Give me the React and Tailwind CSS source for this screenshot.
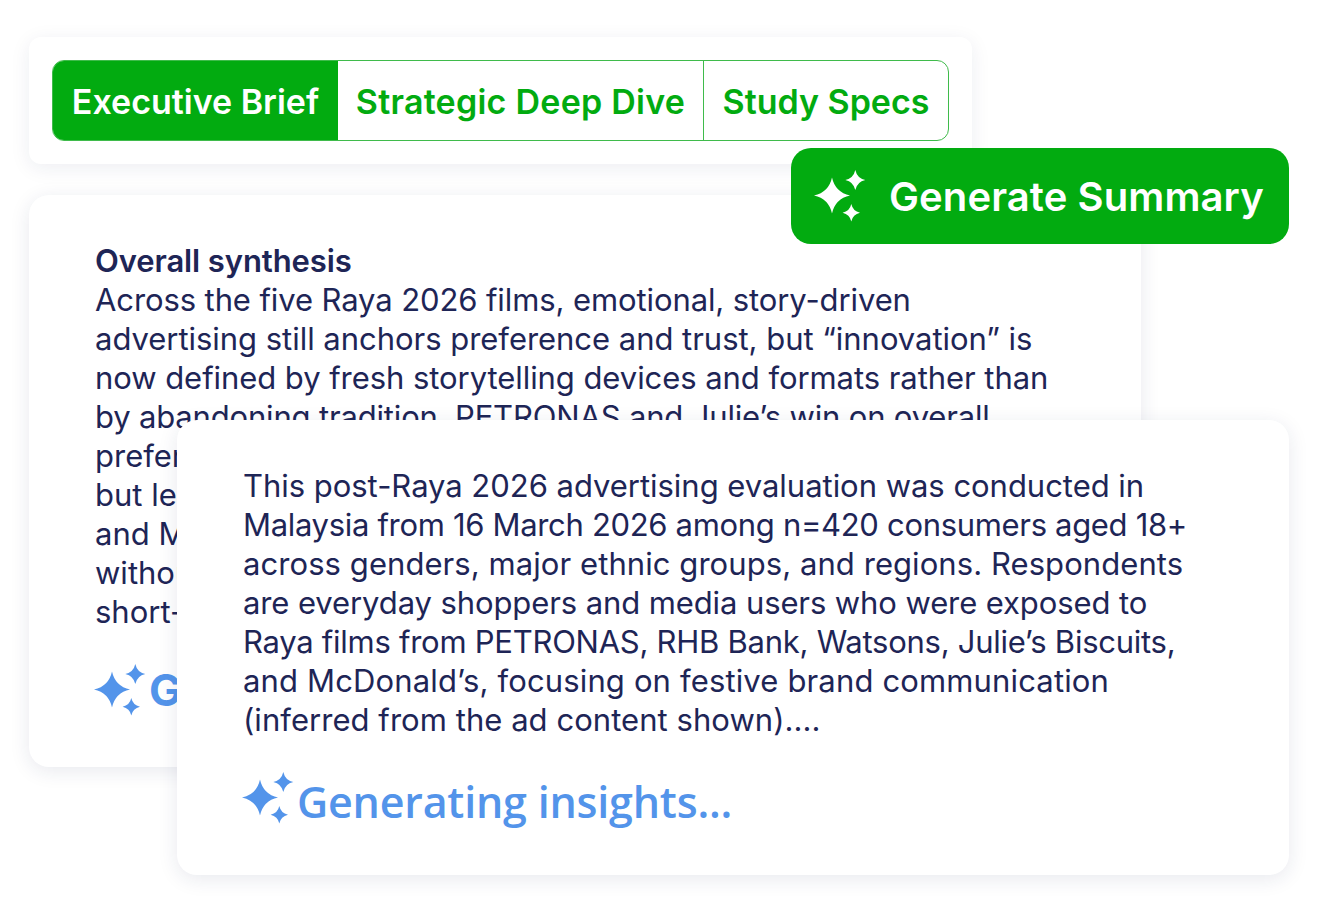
import React from 'react'

const body = "font-['Inter','Liberation_Sans',sans-serif]"

// each line carries its own tracking so the widths land where the reference has them
const backLines = [
  ['Across the five Raya 2026 films, emotional, story-driven', 'tracking-[-0.1px]'],
  ['advertising still anchors preference and trust, but “innovation” is', 'tracking-[-0.03px]'],
  ['now defined by fresh storytelling devices and formats rather than', 'tracking-[-0.06px]'],
  ['by abandoning tradition. PETRONAS and Julie’s win on overall', 'tracking-[-0.17px]'],
  ['preference and emotional connection, while RHB Bank scores', ''],
  ['but leaves room to build stronger brand linkage, and Watsons', ''],
  ['and McDonald’s stand out for novelty and entertainment value', ''],
  ['without always converting that distinctiveness into intent over', ''],
  ['short-term recall alone.', ''],
]

const frontLines = [
  ['This post-Raya 2026 advertising evaluation was conducted in', 'tracking-[-0.03px]'],
  ['Malaysia from 16 March 2026 among n=420 consumers aged 18+', 'tracking-[-0.32px]'],
  ['across genders, major ethnic groups, and regions. Respondents', 'tracking-[0.07px]'],
  ['are everyday shoppers and media users who were exposed to', 'tracking-[-0.1px]'],
  ['Raya films from PETRONAS, RHB Bank, Watsons, Julie’s Biscuits,', 'tracking-[-0.26px]'],
  ['and McDonald’s, focusing on festive brand communication', 'tracking-[0.15px]'],
  ['(inferred from the ad content shown)....', 'tracking-[0.05px]'],
]

// four point star, control points pulled in near the centre
function star(cx, cy, r) {
  const c = r * 0.18
  return `M${cx} ${cy - r}Q${cx + c} ${cy - c} ${cx + r} ${cy}Q${cx + c} ${cy + c} ${cx} ${cy + r}Q${cx - c} ${cy + c} ${cx - r} ${cy}Q${cx - c} ${cy - c} ${cx} ${cy - r}Z`
}

function Sparkles({ className }) {
  return (
    <svg viewBox="0 0 52 52" className={className} fill="currentColor">
      <path d={star(18, 25.5, 18)} />
      <path d={star(41.3, 10, 10)} />
      <path d={star(37.3, 42.7, 8.7)} />
    </svg>
  )
}

function Lines({ items }) {
  return items.map(([line, tracking]) => (
    <div key={line} className={`whitespace-nowrap ${tracking}`}>{line}</div>
  ))
}

function Tab({ label, active, className }) {
  return (
    <div className={`flex items-center justify-center h-full pt-[2px] ${active ? 'bg-[#02ab10] text-white' : 'text-[#02ab10]'} ${className}`}>
      {label}
    </div>
  )
}

export default function App() {
  return (
    <div className={`relative w-[1320px] h-[910px] bg-white overflow-hidden pt-[37px] pl-[29px] ${body} text-[#1e2556]`}>
      {/* Tabs */}
      <div className="w-[943px] h-[127px] p-[23px] bg-white rounded-xl shadow-[0_4px_20px_rgba(30,37,86,0.08)]">
        <div className="flex h-[81px] rounded-xl border border-[#3fbb4b] overflow-hidden text-[34px] font-semibold">
          <Tab label="Executive Brief" active className="w-[285px]" />
          <Tab label="Strategic Deep Dive" className="w-[366px] border-r border-[#3fbb4b] tracking-[0.25px]" />
          <Tab label="Study Specs" className="flex-1" />
        </div>
      </div>

      {/* Overall synthesis card */}
      <div className="mt-[31px] w-[1112px] h-[572px] pt-[46px] pl-[66px] bg-white rounded-[20px] shadow-[0_4px_20px_rgba(30,37,86,0.1)] text-[31px] leading-[39px]">
        <div className="font-semibold tracking-[-0.1px]">Overall synthesis</div>
        <Lines items={backLines} />
        <div className="flex items-center gap-[3px] -ml-[1px] mt-[33px] h-[52px] text-[#5394ea]">
          <Sparkles className="w-[52px] h-[52px]" />
          <span className="text-[44px] font-bold">Generating insights...</span>
        </div>
      </div>

      {/* Methodology card */}
      <div className="relative -mt-[347px] ml-[148px] w-[1112px] h-[455px] pt-[46px] pl-[66px] bg-white rounded-[20px] shadow-[0_4px_20px_rgba(30,37,86,0.1)] text-[31px] leading-[39px]">
        <Lines items={frontLines} />
        <div className="flex items-center gap-[3px] -ml-[1px] mt-[33px] h-[52px] text-[#5394ea]">
          <Sparkles className="w-[52px] h-[52px]" />
          <span className="font-['Open_Sans',sans-serif] text-[43px] font-semibold pt-[7px] tracking-[-0.2px]">Generating insights...</span>
        </div>
      </div>

      {/* Generate button overlaps both cards */}
      <div className="absolute left-[791px] top-[148px] w-[498px] h-[96px] flex items-center pl-[23px] gap-[23px] rounded-[20px] bg-[#02ab10] text-white text-[40px] font-semibold tracking-[0.1px]">
        <Sparkles className="w-[52px] h-[52px]" />
        <span className="pt-[2px]">Generate Summary</span>
      </div>
    </div>
  )
}
